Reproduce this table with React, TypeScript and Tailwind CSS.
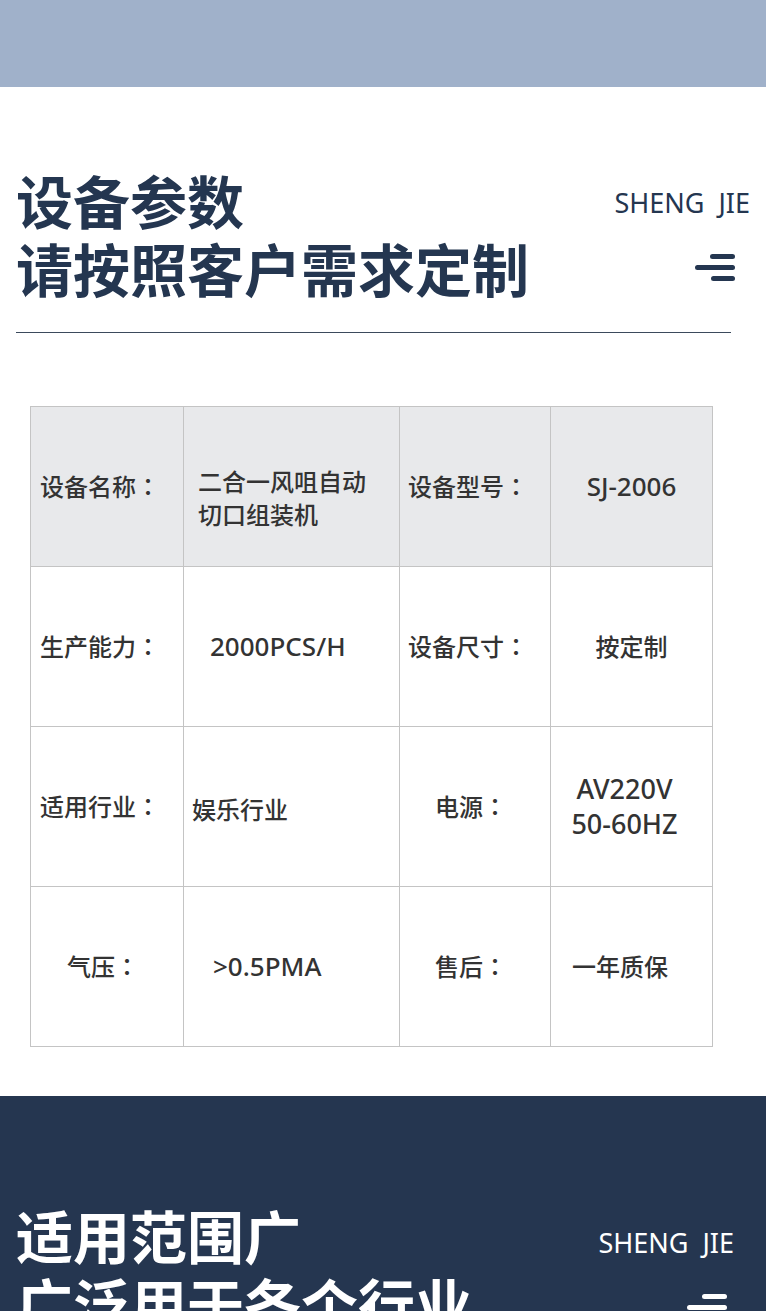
import React from 'react';

const font = { fontFamily: '"Noto Sans", "Noto Sans CJK SC", sans-serif' };
const colonFont = { fontFamily: '"Noto Sans CJK TC", "Noto Sans CJK SC", sans-serif' };

const Bars = ({ color }: { color: string }) => (
  <svg width="40" height="28" viewBox="0 0 40 28">
    <line x1="17.5" y1="2.5" x2="37.5" y2="2.5" stroke={color} strokeWidth="5" strokeLinecap="round" />
    <line x1="2.5" y1="13.5" x2="37.5" y2="13.5" stroke={color} strokeWidth="5" strokeLinecap="round" />
    <line x1="18.5" y1="24.5" x2="37.5" y2="24.5" stroke={color} strokeWidth="5" strokeLinecap="round" />
  </svg>
);

const Cell = ({ children, className = '' }: { children: React.ReactNode; className?: string }) => (
  <div className={`flex items-center border-r border-b border-[#c4c4c4] text-[24px] font-medium text-[#333] ${className}`}>
    {children}
  </div>
);

const Label = ({ text }: { text: string }) => (
  <span>
    {text}
    <span style={colonFont}>：</span>
  </span>
);

export default function App() {
  return (
    <div className="w-[766px] bg-white" style={font}>
      <div className="h-[87px] bg-[#a0b1ca]" />

      {/* header */}
      <div className="pt-[81px] pl-4 pr-4 flex justify-between">
        <div className="text-[57px] font-bold leading-[68px] text-[#243650]">
          <div>设备参数</div>
          <div>请按照客户需求定制</div>
        </div>
        <div className="flex flex-col items-end pt-[18px]">
          <div className="text-[27px] leading-[34px] text-[#243650] whitespace-pre">SHENG  JIE</div>
          <div className="mt-[34px] mr-[15px]">
            <Bars color="#243650" />
          </div>
        </div>
      </div>
      <div className="mt-[28px] ml-4 w-[715px] h-px bg-[#3b4a5c]" />

      {/* table */}
      <div className="mt-[73px] ml-[30px] w-[683px] grid grid-cols-[153px_216px_151px_162px] auto-rows-[160px] border-t border-l border-[#c4c4c4]">
        <Cell className="bg-[#e8e9eb] pl-[9px]"><Label text="设备名称" /></Cell>
        <Cell className="bg-[#e8e9eb] pl-[14px] pt-[22px]">
          <div className="leading-[33px] text-[24px]">
            二合一风咀自动
            <br />
            切口组装机
          </div>
        </Cell>
        <Cell className="bg-[#e8e9eb] pl-[8px]"><Label text="设备型号" /></Cell>
        <Cell className="bg-[#e8e9eb] justify-center text-[26px]">SJ-2006</Cell>

        <Cell className="pl-[9px]"><Label text="生产能力" /></Cell>
        <Cell className="pl-[26px] text-[26px]">2000PCS/H</Cell>
        <Cell className="pl-[8px]"><Label text="设备尺寸" /></Cell>
        <Cell className="justify-center text-[22px]">按定制</Cell>

        <Cell className="pl-[9px]"><Label text="适用行业" /></Cell>
        <Cell className="pl-[8px] pt-[6px] text-[23px]">娱乐行业</Cell>
        <Cell className="pl-[35px]"><Label text="电源" /></Cell>
        <Cell className="justify-center pr-[14px] pb-[2px]">
          <div className="text-center leading-[35px] text-[27px]">
            AV220V
            <br />
            50-60HZ
          </div>
        </Cell>

        <Cell className="pl-[36px]"><Label text="气压" /></Cell>
        <Cell className="pl-[29px] text-[26px]">&gt;0.5PMA</Cell>
        <Cell className="pl-[35px]"><Label text="售后" /></Cell>
        <Cell className="pl-[21px] text-[23px]">一年质保</Cell>
      </div>

      {/* bottom section */}
      <div className="mt-[49px] h-[215px] bg-[#253650] pt-[107px] pl-4 pr-[32px] flex justify-between overflow-hidden">
        <div className="text-[57px] font-bold leading-[68px] text-white">
          <div>适用范围广</div>
          <div>广泛用于各个行业</div>
        </div>
        <div className="flex flex-col items-end pt-[23px]">
          <div className="text-[27px] leading-[34px] text-white whitespace-pre">SHENG  JIE</div>
          <div className="mt-[34px] mr-[7px]">
            <Bars color="#ffffff" />
          </div>
        </div>
      </div>
    </div>
  );
}
